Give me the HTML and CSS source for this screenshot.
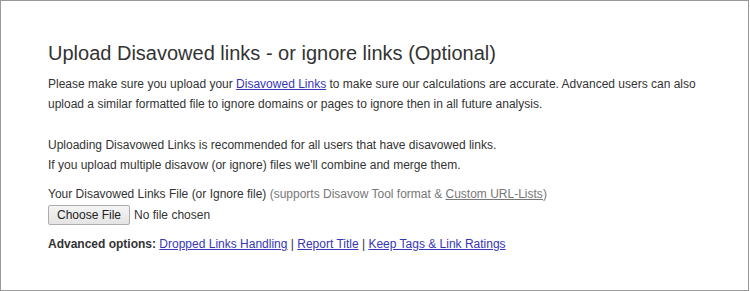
FILE: index.html
```html
<!DOCTYPE html>
<html lang="en">
<head>
    <meta charset="UTF-8">
    <meta name="viewport" content="width=device-width, initial-scale=1.0">
    <title>Upload Disavowed Links</title>
    <link rel="stylesheet" href="styles.css">
</head>
<body>
    <div class="panel">
        <h2>Upload Disavowed links - or ignore links (Optional)</h2>

        <p>Please make sure you upload your <a href="#">Disavowed Links</a> to make sure our calculations are accurate. Advanced users can also upload a similar formatted file to ignore domains or pages to ignore then in all future analysis.</p>

        <p>Uploading Disavowed Links is recommended for all users that have disavowed links.<br>
        If you upload multiple disavow (or ignore) files we'll combine and merge them.</p>

        <!-- File upload -->
        <div class="upload">
            <label for="disavowFile">Your Disavowed Links File (or Ignore file) <span class="hint">(supports Disavow Tool format &amp; <a href="#">Custom URL-Lists</a>)</span></label>
            <input type="file" id="disavowFile">
        </div>

        <div class="advanced">
            <b>Advanced options:</b>
            <a href="#">Dropped Links Handling</a> |
            <a href="#">Report Title</a> |
            <a href="#">Keep Tags &amp; Link Ratings</a>
        </div>
    </div>
</body>
</html>
```

FILE: styles.css
```css
body {
    margin: 0;
    font-family: "Liberation Sans", Arial, sans-serif;
    font-size: 12px;
    color: #333;
    background: #fff;
}
.panel {
    width: 749px;
    height: 291px;
    box-sizing: border-box;
    border: 1px solid #999;
    padding: 38px 47px 0;
}
h2 {
    font-size: 20px;
    font-weight: normal;
    margin: 0 0 7px;
    line-height: 28px;
    color: #333;
}
p {
    margin: 0 0 21px;
    line-height: 20px;
}
a {
    color: #3636b8;
}
.upload {
    margin-top: -12px;
    line-height: 20px;
}
.upload label {
    display: block;
}
.hint {
    color: #777;
}
.hint a {
    color: #777;
}
input[type="file"] {
    font-family: "Liberation Sans", Arial, sans-serif;
    font-size: 12px;
    color: #333;
    margin: 1px 0 0;
}
input[type="file"]::file-selector-button {
    font-family: "Liberation Sans", Arial, sans-serif;
    font-size: 12px;
    color: #222;
    background: linear-gradient(#f4f4f4, #e4e4e4);
    border: 1px solid #adadad;
    border-radius: 2px;
    padding: 1px 8px;
    margin-right: 4px;
    height: 20px;
}
.advanced {
    margin-top: 9px;
    line-height: 20px;
}
.advanced b {
    color: #333;
}
```
